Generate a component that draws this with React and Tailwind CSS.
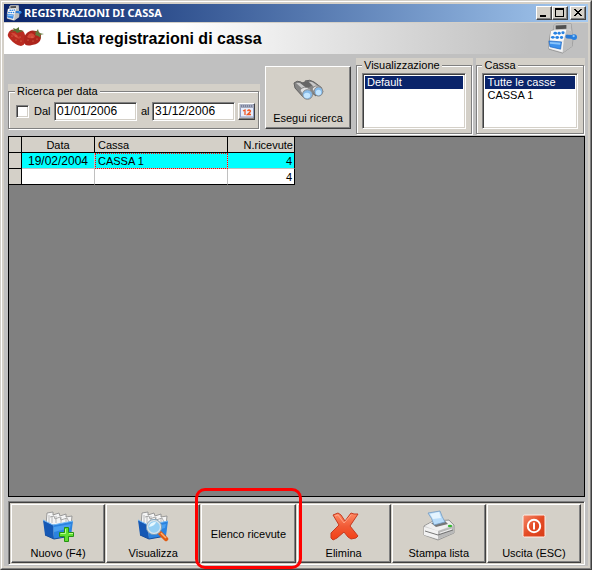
import React from "react";

const raised =
  "bg-[#d4d0c8] border border-t-white border-l-white border-r-[#404040] border-b-[#404040] shadow-[inset_-1px_-1px_0_#808080]";
const sunken =
  "border border-t-[#808080] border-l-[#808080] border-r-white border-b-white bg-white shadow-[inset_1px_1px_0_#404040,inset_-1px_-1px_0_#d4d0c8]";

function RegisterIcon({ className }) {
  return (
    <svg viewBox="0 0 32 32" className={className} aria-hidden="true">
      <path d="M7 3 L9 1 L25 1 L26 12 L27 14 L26 24 L16 31 L2 27 L2 20 L4 8 L7 7Z" fill="#dedede" stroke="#8a8a8a" strokeWidth=".8" />
      <path d="M7 3 L9 1 L25 1 L25 7 L7 7Z" fill="#c4c4c4" />
      <path d="M9 2.500 L20 2 L20 6 L9 6.500Z" fill="#505050" />
      <path d="M4 8 L20 7 L20 18 L3 19Z" fill="#fafafa" />
      <path d="M20 7 L26 8 L26 24 L16 31 L17 19Z" fill="#bdbdbd" />
      <path d="M3 18 L17 19 L16 30 L2 26Z" fill="#f4f4f4" />
      <path d="M2 18.500 L15 19.500 L14 27 L3 24.500Z" fill="#3d91ec" stroke="#1b63bf" strokeWidth=".7" />
      <path d="M3 19.500 L14 20.500 L13.600 22.500 L3 21.500Z" fill="#8bc5fb" />
      <g fill="#2882e2">
        <ellipse cx="8.500" cy="10.500" rx="1.900" ry="1.500" />
        <ellipse cx="12.500" cy="10.500" rx="1.700" ry="1.500" />
        <ellipse cx="16.500" cy="10" rx="1.700" ry="1.500" />
        <ellipse cx="6" cy="14.800" rx="1.900" ry="1.500" />
        <ellipse cx="10.500" cy="15" rx="1.900" ry="1.500" />
        <ellipse cx="15" cy="15" rx="1.700" ry="1.500" />
      </g>
      <path d="M21 14 L28 14.500" stroke="#2b79d3" strokeWidth="4" strokeLinecap="round" />
      <circle cx="28" cy="14.500" r="3" fill="#2880df" />
      <circle cx="27.500" cy="13.500" r="1.200" fill="#91cbff" />
    </svg>
  );
}

function Strawberries() {
  return (
    <svg viewBox="0 0 38 20" className="h-5 w-[38px]" aria-hidden="true">
      <path d="M1 7 Q3 1 9 3 Q17 2 18 8 Q20 18 14 19 Q8 18 3 12 Q0 9 1 7Z" fill="#b92a20" />
      <path d="M19 7 Q23 2 29 4 Q35 5 34 11 Q33 17 25 18 Q17 20 17 14 Q17 9 19 7Z" fill="#ad241c" />
      <path d="M4 6 Q7 5 10 8 L13 12 Q8 11 4 6Z M22 7 Q26 5 28 9 L27 11 Q22 12 20 10Z" fill="#d14838" />
      <path d="M3 5 L7 3 L6 1 L9 2 L12 0 L12 3 L17 4 L13 5 L10 6 L8 4Z" fill="#587336" />
      <path d="M26 4 L29 5 L31 2 L32 6 L37 7 L33 8 L34 11 L31 9 L28 8 L29 6Z" fill="#617b3d" />
      <g fill="#ed9b70">
        <circle cx="5" cy="9" r=".5" /><circle cx="9" cy="9" r=".5" /><circle cx="13" cy="10" r=".5" />
        <circle cx="9" cy="13" r=".5" /><circle cx="14" cy="14" r=".5" /><circle cx="21" cy="13" r=".5" />
        <circle cx="25" cy="10" r=".5" /><circle cx="26" cy="14" r=".5" /><circle cx="30" cy="12" r=".5" />
      </g>
    </svg>
  );
}

function Binoculars() {
  return (
    <svg viewBox="0 0 32 32" className="size-8" aria-hidden="true">
      <path d="M2 8 Q5 5 9 7 L20 16 L12 23 L3 13Z" fill="#858585" stroke="#616161" />
      <path d="M13 6 Q18 4 22 7 L30 13 L24 21 L15 14Z" fill="#858585" stroke="#616161" />
      <path d="M7 8 L16 6 L21 10 L12 15Z" fill="#666" />
      <path d="M4 8 L8 8 L17 15 L14 17Z M17 7 L20 7 L29 13 L25 15Z" fill="#c9c9c9" />
      <path d="M8 15 Q12 10 18 14 L20 19 L12 23Z" fill="#e2e2e2" stroke="#888" />
      <path d="M20 14 Q23 9 29 12 L31 17 L24 20Z" fill="#e2e2e2" stroke="#888" />
      <ellipse cx="15.500" cy="19.500" rx="5" ry="4.800" fill="#87bbe9" stroke="#888" />
      <ellipse cx="26.500" cy="16.500" rx="4.300" ry="4.600" fill="#87bbe9" stroke="#888" />
      <ellipse cx="15" cy="20.500" rx="3.200" ry="2.800" fill="#c2e5ff" />
      <ellipse cx="26.500" cy="17.500" rx="2.700" ry="2.800" fill="#c2e5ff" />
    </svg>
  );
}

function CalendarIcon() {
  return (
    <svg viewBox="0 0 14 14" className="size-[14px]" aria-hidden="true">
      <rect x=".5" y="1" width="13" height="12" fill="#e8eefb" stroke="#8d9cc5" />
      <path d="M0 1h14v3H0z" fill="#a3a9be" />
      <path d="M1 2h12" stroke="#555b79" strokeDasharray="1 1" />
      <path d="M3 7l2-1v5M7.500 7q1.500-2 3 0q0 1-3 3.500h3.500" fill="none" stroke="#ee5724" strokeWidth="1.300" />
    </svg>
  );
}

function Folder() {
  return (
    <g>
      <path d="M5 3 L11 2 L11 5 L17 3 L18 6 L24 4 L24 7 L30 6 L29 15 L4 15Z" fill="#f5f5f5" stroke="#888" strokeWidth=".8" />
      <path d="M7 5 L7 13 M10 6v7 M14 6v7 M19 7v6 M24 8v6" stroke="#aaa" strokeWidth=".8" />
      <path d="M8 7l4-1 1 3 5-2 1 3 6-2 2 4" fill="none" stroke="#999" strokeWidth=".8" />
      <path d="M1 10 L11 15 L12 29 L3 25Z" fill="#1558b5" />
      <path d="M11 15 L31 11 L29 26 L12 29Z" fill="#2b83df" />
      <path d="M1 10 L11 15 L31 11" fill="none" stroke="#74baf8" />
      <path d="M12 17 L29 14 L28 18 L12 22Z" fill="#4aa0f1" />
      <path d="M3 25 L12 29 L29 26" fill="none" stroke="#134c9d" />
    </g>
  );
}

function NewIcon() {
  return (
    <svg viewBox="0 0 32 32" className="size-8" aria-hidden="true">
      <Folder />
      <path d="M22.500 17.500h4v5h5v4h-5v5h-4v-5h-5v-4h5z" fill="#61df32" stroke="#259312" />
      <path d="M23.500 19v4.500h-5M27 23.500h4" fill="none" stroke="#baff8e" />
    </svg>
  );
}

function ViewIcon() {
  return (
    <svg viewBox="0 0 32 32" className="size-8" aria-hidden="true">
      <Folder />
      <path d="M23 23l6 6" stroke="#df5b13" strokeWidth="4.500" strokeLinecap="round" />
      <path d="M24 23l5 5" stroke="#ffb06f" strokeWidth="1.500" />
      <circle cx="17" cy="17" r="6.800" fill="#94cff4" stroke="#d7e2e8" strokeWidth="2" />
      <circle cx="17" cy="17" r="7.600" fill="none" stroke="#668da8" strokeWidth=".7" />
      <path d="M12 17q1-5 7-5q-1 4-7 5z" fill="#e6f8ff" />
    </svg>
  );
}

function DeleteIcon() {
  return (
    <svg viewBox="0 0 32 32" className="size-8" aria-hidden="true">
      <defs>
        <linearGradient id="cross" x1="0" y1="0" x2="0" y2="1">
          <stop stopColor="#ff8b65" />
          <stop offset=".5" stopColor="#f15a35" />
          <stop offset="1" stopColor="#f33f14" />
        </linearGradient>
      </defs>
      <path
        d="M5 5 L10 3 L13 5 L17 11 L23 3 L26 4 L30 4 L22 16 L30 26 L28 28 L23 29 L20 27 L16 22 L9 28 L5 30 L3 28 L3 23 L11 15Z"
        fill="url(#cross)" stroke="#c63a20" strokeLinejoin="round"
      />
      <path d="M7 6l3-1 6 8 7-8" fill="none" stroke="#ffb298" strokeWidth=".8" />
    </svg>
  );
}

function PrinterIcon() {
  return (
    <svg viewBox="0 0 32 32" className="size-8" aria-hidden="true">
      <path d="M1 16 L10 11 L26 10 L31 15 L31 23 L15 30 L1 25Z" fill="#d5d5d5" stroke="#888" strokeWidth=".8" />
      <path d="M2 16 L11 11 L26 11 L30 15 L15 21Z" fill="#f0f0f0" />
      <path d="M8 13 L22 11 L25 14 L13 17Z" fill="#777" />
      <path d="M5 3 L17 1 Q19 7 22 12 L11 15 Q9 8 5 3Z" fill="#b8dcfa" stroke="#729ac2" strokeWidth=".8" />
      <path d="M7 4 L16 2 L18 8 L10 9Z" fill="#e4f4ff" />
      <path d="M1 17 L15 21 L15 29 L1 25Z" fill="#f2f2f2" />
      <path d="M15 21 L31 16 L31 23 L15 29Z" fill="#b9b9b9" />
      <path d="M2 21 L15 25 L30 20" fill="none" stroke="#777" />
      <path d="M17 23 L29 19" stroke="#eee" />
      <ellipse cx="27" cy="16" rx="2.200" ry="1.300" fill="#38b833" />
    </svg>
  );
}

function ExitIcon() {
  return (
    <svg viewBox="0 0 32 32" className="size-8" aria-hidden="true">
      <defs>
        <linearGradient id="power" x1="0" y1="0" x2="1" y2="1">
          <stop stopColor="#f58a6b" />
          <stop offset=".5" stopColor="#e44b25" />
          <stop offset="1" stopColor="#d93b16" />
        </linearGradient>
      </defs>
      <rect x="5" y="5" width="22" height="22" rx="1.500" fill="url(#power)" stroke="#fff0e9" />
      <circle cx="16" cy="16" r="6.200" fill="none" stroke="white" strokeWidth="2" />
      <path d="M16 12.500v7" stroke="white" strokeWidth="2" />
    </svg>
  );
}

function CaptionButton({ label, children }) {
  return (
    <button aria-label={label} className={`flex h-[14px] w-4 items-center justify-center ${raised}`}>
      <svg viewBox="0 0 12 10" className="h-[10px] w-3" shapeRendering="crispEdges" aria-hidden="true">
        {children}
      </svg>
    </button>
  );
}

function Group({ title, className, bodyClass, children }) {
  return (
    <div className={`bg-[#d4d0c8] pr-px pb-px ${className}`}>
      <fieldset className={`min-w-0 border border-[#808080] pb-1 shadow-[1px_1px_0_white,inset_1px_1px_0_white] ${bodyClass}`}>
        <legend className="bg-[#d4d0c8] px-0.5 leading-[14px]">{title}</legend>
        {children}
      </fieldset>
    </div>
  );
}

function ListBox({ label, options }) {
  return (
    <select
      size={3}
      aria-label={label}
      defaultValue={options[0]}
      className={`mt-px block h-14 w-full appearance-none overflow-hidden rounded-none p-0.5 outline-none ${sunken}`}
    >
      {options.map((o) => (
        <option
          key={o}
          className="h-[13px] min-h-0 px-0.5 py-0 leading-[13px] checked:bg-[linear-gradient(#0a246a,#0a246a)] checked:[-webkit-text-fill-color:white]"
        >
          {o}
        </option>
      ))}
    </select>
  );
}

function ToolButton({ label, icon, marked }) {
  return (
    <div className="relative flex-1">
      <button className={`flex h-[59px] w-full flex-col items-center ${icon ? "justify-end pb-0.5" : "justify-center"} ${raised}`}>
        {icon}
        <span className={icon ? "mt-1 leading-[14px]" : "leading-[14px]"}>{label}</span>
      </button>
      {marked && (
        <span className="pointer-events-none absolute -inset-x-1.5 -top-4 -bottom-1.5 z-10 rounded-[10px] border-3 border-[#ff0000]" />
      )}
    </div>
  );
}

const rows = [
  { date: "19/02/2004", till: "CASSA 1", count: 4, selected: true },
  { date: "", till: "", count: 4, selected: false },
];

export default function App() {
  return (
    <div className="flex h-screen flex-col border border-t-[#d4d0c8] border-l-[#d4d0c8] border-r-[#404040] border-b-[#404040] bg-[#c0c0c0] font-['Liberation_Sans',Arial,sans-serif] text-[11px] text-black">
      <div className="flex min-h-0 flex-1 flex-col border border-t-white border-l-white border-r-[#808080] border-b-[#808080]">
        <div className="flex min-h-0 flex-1 flex-col border-2 border-[#d4d0c8]">
          <header className="flex h-[18px] shrink-0 items-center bg-linear-to-r from-[#0a246a] to-[#a6caf0] pr-0.5 pl-0.5">
            <RegisterIcon className="size-4" />
            <span className="ml-0.5 flex-1 font-['Noto_Sans',Tahoma,sans-serif] text-[11px] leading-4 font-bold text-white">
              REGISTRAZIONI DI CASSA
            </span>
            <div className="flex">
              <CaptionButton label="Riduci a icona">
                <path d="M2 7h6v2H2z" />
              </CaptionButton>
              <CaptionButton label="Ingrandisci">
                <path d="M1 0h9v9H1zM2 2v6h7V2z" fillRule="evenodd" />
              </CaptionButton>
            </div>
            <div className="ml-0.5">
              <CaptionButton label="Chiudi">
                <path d="M2 1h2v1h1v1h2V2h1V1h2v1H9v1H8v1H7v1h1v1h1v1h1v1H8V7H7V6H5v1H4v1H2V7h1V6h1V5h1V4H4V3H3V2H2z" />
              </CaptionButton>
            </div>
          </header>

          <div className="flex h-8 shrink-0 items-center border-t border-[#d4d0c8] bg-linear-to-r from-white from-30% to-[#c0c0c0] to-90% pr-2.5 pl-[3px]">
            <div className="-mt-1">
              <Strawberries />
            </div>
            <h1 className="ml-3 flex-1 text-base font-bold">Lista registrazioni di cassa</h1>
            <RegisterIcon className="size-[31px]" />
          </div>

          <section className="flex shrink-0 items-end pt-1 pr-[3px] pb-px pl-1">
            <Group title="Ricerca per data" className="mb-[5px] w-[252px] shrink-0" bodyClass="pl-1.5">
              <div className="flex h-[26px] items-center pl-px">
                <input type="checkbox" id="range" className={`size-[13px] shrink-0 appearance-none ${sunken}`} />
                <label htmlFor="range" className="ml-[5px] w-5 shrink-0">Dal</label>
                <input aria-label="Dal" defaultValue="01/01/2006" className={`h-[19px] w-[83px] shrink-0 pl-0.5 text-xs outline-none ${sunken}`} />
                <label htmlFor="to" className="ml-1 w-[11px] shrink-0">al</label>
                <input id="to" defaultValue="31/12/2006" className={`h-[19px] w-[83px] shrink-0 pl-0.5 text-xs outline-none ${sunken}`} />
                <button aria-label="Calendario" className={`ml-[3px] flex size-[17px] shrink-0 items-center justify-center ${raised}`}>
                  <CalendarIcon />
                </button>
              </div>
            </Group>
            <button className={`mb-1.5 ml-[5px] flex h-[63px] w-[86px] shrink-0 flex-col items-center justify-end pb-[3px] ${raised}`}>
              <Binoculars />
              <span className="mt-1 leading-[14px]">Esegui ricerca</span>
            </button>
            <Group title="Visualizzazione" className="ml-[5px] flex-[117]" bodyClass="px-[5px]">
              <ListBox label="Visualizzazione" options={["Default"]} />
            </Group>
            <Group title="Cassa" className="ml-[3px] flex-[108]" bodyClass="px-[5px]">
              <ListBox label="Cassa" options={["Tutte le casse", "CASSA 1"]} />
            </Group>
          </section>

          <main className="mr-[3px] ml-1 min-h-0 flex-1 border border-black bg-[#808080]">
            <table className="w-[286px] table-fixed border-separate border-spacing-0 leading-[14px]">
              <colgroup>
                <col className="w-[13px]" />
                <col className="w-[73px]" />
                <col className="w-[133px]" />
                <col className="w-[67px]" />
              </colgroup>
              <thead>
                <tr className="h-4 bg-[#d4d0c8] [&>*]:border-r [&>*]:border-b [&>*]:border-black [&>*]:py-0 [&>*]:font-normal">
                  <td />
                  <th className="px-0 text-center">Data</th>
                  <th className="px-[3px] text-left">Cassa</th>
                  <th className="px-px text-right">N.ricevute</th>
                </tr>
              </thead>
              <tbody>
                {rows.map((r, i) => (
                  <tr
                    key={i}
                    className={`h-4 [&>*]:border-r [&>*]:border-b [&>*]:py-0 ${
                      r.selected ? "bg-[#00ffff] [&>*]:border-b-[#c0c0c0]" : "bg-white [&>*]:border-b-black"
                    }`}
                  >
                    <td className="border-r-black border-b-black! bg-[#d4d0c8]" />
                    <td className="border-r-[#c0c0c0] px-0 text-center text-xs leading-[14px]">{r.date}</td>
                    <td
                      className={`border-r-[#c0c0c0] px-[3px] ${
                        r.selected ? "outline-1 -outline-offset-1 outline-dotted outline-[#ff0000]" : ""
                      }`}
                    >
                      {r.till}
                    </td>
                    <td className="border-r-black px-0.5 text-right">{r.count}</td>
                  </tr>
                ))}
              </tbody>
            </table>
          </main>

          <footer className="mt-1 mr-[3px] mb-px ml-1 shrink-0 border border-t-[#808080] border-l-[#808080] border-r-white border-b-white bg-[#d4d0c8] shadow-[inset_1px_1px_0_#404040]">
            <div className="flex gap-px pt-0.5 pr-[3px] pb-px pl-0.5">
              <ToolButton label="Nuovo (F4)" icon={<NewIcon />} />
              <ToolButton label="Visualizza" icon={<ViewIcon />} />
              <ToolButton label="Elenco ricevute" marked />
              <ToolButton label="Elimina" icon={<DeleteIcon />} />
              <ToolButton label="Stampa lista" icon={<PrinterIcon />} />
              <ToolButton label="Uscita (ESC)" icon={<ExitIcon />} />
            </div>
          </footer>
        </div>
      </div>
    </div>
  );
}
